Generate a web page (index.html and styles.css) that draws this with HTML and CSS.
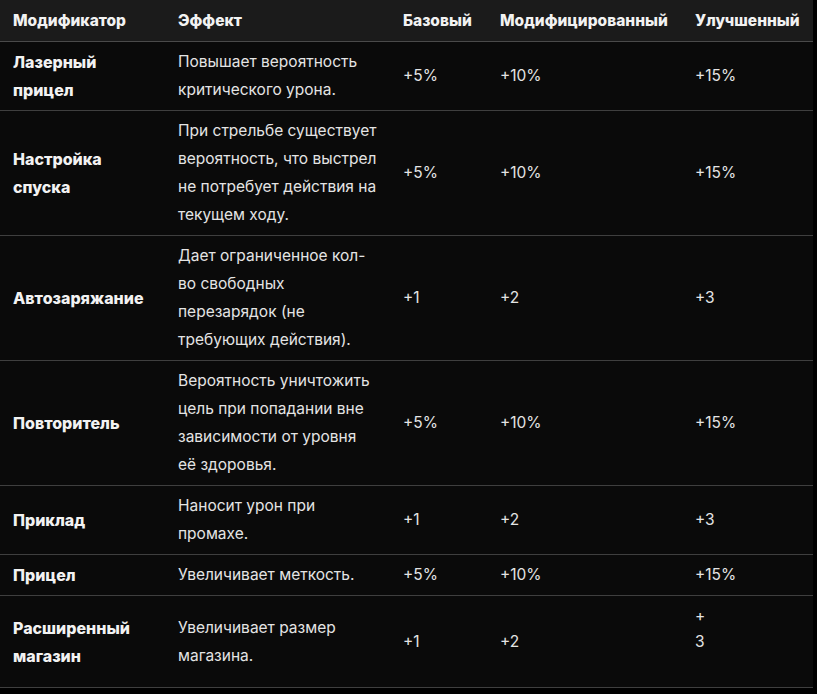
FILE: index.html
```html
<!DOCTYPE html>
<html lang="ru">
<head>
<meta charset="utf-8">
<title>Модификаторы</title>
<link rel="stylesheet" href="styles.css">
</head>
<body>
<table class="mods">
  <colgroup>
    <col class="c-name">
    <col class="c-effect">
    <col class="c-base">
    <col class="c-mod">
    <col class="c-imp">
  </colgroup>
  <thead>
    <tr>
      <th>Модификатор</th>
      <th>Эффект</th>
      <th>Базовый</th>
      <th>Модифицированный</th>
      <th>Улучшенный</th>
    </tr>
  </thead>
  <tbody>
    <tr>
      <td class="name">Лазерный прицел</td>
      <td>Повышает вероятность критического урона.</td>
      <td>+5%</td>
      <td>+10%</td>
      <td>+15%</td>
    </tr>
    <tr>
      <td class="name">Настройка спуска</td>
      <td>При стрельбе существует вероятность, что выстрел не потребует действия на текущем ходу.</td>
      <td>+5%</td>
      <td>+10%</td>
      <td>+15%</td>
    </tr>
    <tr>
      <td class="name">Автозаряжание</td>
      <td>Дает ограниченное кол-во свободных перезарядок (не требующих действия).</td>
      <td>+1</td>
      <td>+2</td>
      <td>+3</td>
    </tr>
    <tr>
      <td class="name">Повторитель</td>
      <td>Вероятность уничтожить цель при попадании вне зависимости от уровня её здоровья.</td>
      <td>+5%</td>
      <td>+10%</td>
      <td>+15%</td>
    </tr>
    <tr>
      <td class="name">Приклад</td>
      <td>Наносит урон при промахе.</td>
      <td>+1</td>
      <td>+2</td>
      <td>+3</td>
    </tr>
    <tr>
      <td class="name">Прицел</td>
      <td>Увеличивает меткость.</td>
      <td>+5%</td>
      <td>+10%</td>
      <td>+15%</td>
    </tr>
    <tr>
      <td class="name">Расширенный магазин</td>
      <td>Увеличивает размер магазина.</td>
      <td>+1</td>
      <td>+2</td>
      <td class="split">+<br>3</td>
    </tr>
  </tbody>
</table>
</body>
</html>
```

FILE: styles.css
```css
html, body {
  margin: 0;
  padding: 0;
  background: #000;
}

body {
  font-family: Inter, "Noto Sans", sans-serif;
  color: #e4e4e4;
}

.mods {
  width: 813px;
  table-layout: fixed;
  border-collapse: collapse;
  background: #0a0a0a;
  font-size: 15.5px;
  line-height: 28px;
}

.c-name { width: 165px; }
.c-effect { width: 225px; }
.c-base { width: 97px; }
.c-mod { width: 195px; }
.c-imp { width: 131px; }

.mods th {
  background: #1b1b1b;
  color: #f2f2f2;
  font-size: 15.5px;
  font-weight: 800;
  text-align: left;
  padding: 7px 13px 6px;
  border-bottom: 1px solid #4a4a4a;
}

.mods td {
  padding: 6px 13px;
  vertical-align: middle;
  border-bottom: 1px solid #3f3f3f;
}

.mods td.name {
  font-size: 16px;
  font-weight: 800;
  color: #f2f2f2;
}

.mods td.split {
  vertical-align: top;
  line-height: 26px;
  padding-top: 7px;
  padding-bottom: 32px;
}
```
